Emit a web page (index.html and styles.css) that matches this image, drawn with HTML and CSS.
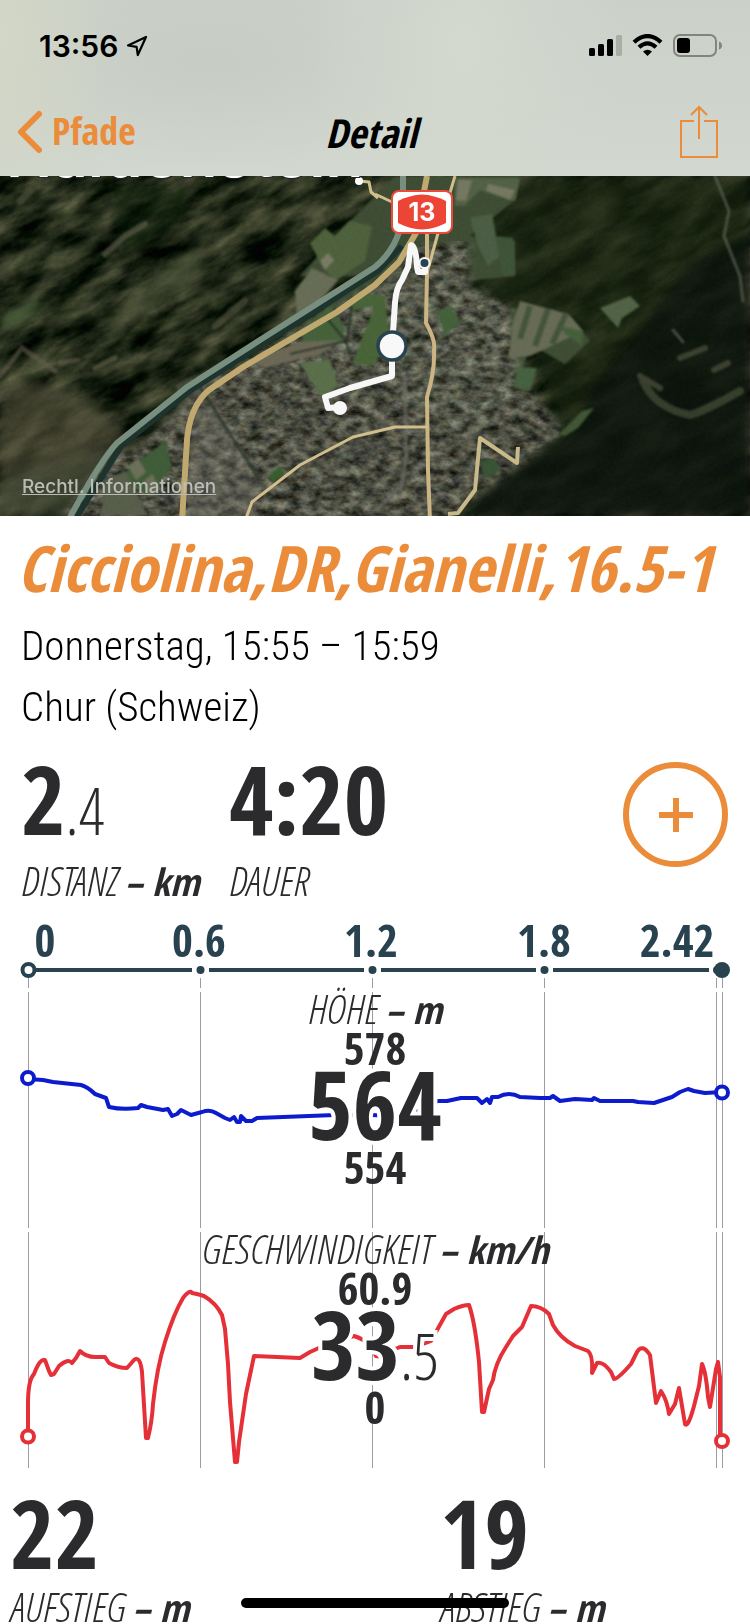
FILE: index.html
```html
<!DOCTYPE html>
<html lang="de">
<head>
<meta charset="utf-8">
<meta name="viewport" content="width=device-width, initial-scale=1">
<title>Detail</title>
<link rel="stylesheet" href="styles.css">
</head>
<body>
<div class="screen">
  <header class="top">
    <div class="status">
      <div class="status-left">
        <span class="time">13:56</span>
        <svg class="location" width="22" height="22" viewBox="0 0 22 22" aria-hidden="true"><path d="M2 10.500 20 2 11.800 20 10.600 11.800Z" fill="none" stroke="#000" stroke-width="2.200" stroke-linejoin="round"/></svg>
      </div>
      <svg class="indicators" width="134" height="24" viewBox="0 0 134 24" aria-hidden="true">
        <rect x="0" y="14" width="6" height="8" rx="1.500"/>
        <rect x="9" y="10" width="6" height="12" rx="1.500"/>
        <rect x="18" y="5" width="6" height="17" rx="1.500"/>
        <rect x="27" y="1" width="6" height="21" rx="1.500" fill="#a8ada5"/>
        <g fill="none" stroke="#000" stroke-width="4.200">
          <path d="M45 8.200Q58.500-4 72 8.200"/>
          <path d="M50 13.300Q58.500 5.500 67 13.300"/>
        </g>
        <path d="M54 17.600Q58.500 13.800 63 17.600L58.500 22Z"/>
        <rect x="85" y="1" width="42" height="21" rx="6" fill="none" stroke="#80857e" stroke-width="2"/>
        <rect x="88" y="4" width="13" height="15" rx="3"/>
        <path d="M130 7.500Q133 8.500 133 11.500T130 15.500Z" fill="#80857e"/>
      </svg>
    </div>
    <nav class="nav">
      <a class="back" href="#pfade">
        <svg width="26" height="44" viewBox="0 0 26 44" aria-hidden="true"><path d="M23 4 5 22 23 40" fill="none" stroke="#ea8c3a" stroke-width="6" stroke-linecap="round" stroke-linejoin="round"/></svg>
        <span>Pfade</span>
      </a>
      <h1 class="nav-title">Detail</h1>
      <button class="share" type="button" aria-label="Teilen">
        <svg width="38" height="54" viewBox="0 0 38 54" aria-hidden="true"><path d="M14 16H1V52H37V16H24M19 34V2M11 10 19 2 27 10" fill="none" stroke="#ea8c3a" stroke-width="2"/></svg>
      </button>
    </nav>
  </header>

  <section class="map">
    <svg class="map-art" viewBox="0 0 750 340" preserveAspectRatio="xMidYMid slice" role="img" aria-label="Karte von Chur">
      <defs>
        <filter id="forest" x="0" y="0" width="100%" height="100%" color-interpolation-filters="sRGB">
          <feTurbulence type="fractalNoise" baseFrequency="0.02 0.05" numOctaves="6" seed="11"/>
          <feColorMatrix values="0.75 0.15 0 0 -0.29  0.68 0.15 0 0 -0.22  0.55 0.1 0 0 -0.21  0 0 0 0 1"/>
        </filter>
        <filter id="grain" x="0" y="0" width="100%" height="100%" color-interpolation-filters="sRGB">
          <feTurbulence type="fractalNoise" baseFrequency="0.35" numOctaves="2" seed="4"/>
          <feColorMatrix values="0.3 0 0 0 -0.08  0 0.3 0 0 -0.08  0 0 0.3 0 -0.08  0 0 0 0 0.45"/>
        </filter>
        <filter id="town" x="0" y="0" width="100%" height="100%" color-interpolation-filters="sRGB">
          <feTurbulence type="fractalNoise" baseFrequency="0.08 0.12" numOctaves="5" seed="7" result="n"/>
          <feColorMatrix in="n" values="0.95 0.1 0 0 -0.13  0.95 0 0 0 -0.08  0.85 0 0.1 0 -0.13  0 0 0 0 1" result="c"/>
          <feGaussianBlur in="SourceAlpha" stdDeviation="4" result="a"/>
          <feComposite in="c" in2="a" operator="in"/>
        </filter>
        <filter id="soft" x="-20%" y="-20%" width="140%" height="140%"><feGaussianBlur stdDeviation="5"/></filter>
        <filter id="blur1"><feGaussianBlur stdDeviation="1"/></filter>
      </defs>
      <rect width="750" height="340" fill="#1c2819"/>
      <g transform="rotate(-28 375 170)"><rect x="-120" y="-250" width="1000" height="850" filter="url(#forest)"/></g>

      <g filter="url(#soft)">
        <path d="M440 0H750V340H455L500 300 560 240 530 170 470 100Z" fill="#1a2916" opacity=".7"/>
        <path d="M750 60 690 85 650 140 600 200 570 255 480 320 470 340H750Z" fill="#081009" opacity=".6"/>
        <path d="M110 10H190L180 50 120 80Z" fill="#0c120a" opacity=".5"/>
        <path d="M0 210 40 205 110 240 130 265 90 290 0 300Z" fill="#605c46" opacity=".6"/>
        <path d="M110 150 170 90 205 70 200 105 150 130 110 165Z" fill="#5a6446" opacity=".6"/>
        <path d="M0 140 40 122 36 138 5 154Z" fill="#47643c" opacity=".8"/>
        <path d="M0 300 100 275 110 300 70 340H0Z" fill="#555a45" opacity=".7"/>
      </g>
      <g filter="url(#blur1)" fill="none" stroke-linecap="round" opacity=".6">
        <path d="M105 78 125 60 145 48" stroke="#74735d" stroke-width="6"/>
        <path d="M0 200 22 172 55 195M60 187 78 184M95 192 115 182" stroke="#716d57" stroke-width="5"/>
        <path d="M215 150 245 125M20 25 30 15" stroke="#5e6148" stroke-width="7"/>
        <path d="M715 0 729 35 724 60 740 100 743 125" stroke="#798071" stroke-width="3"/>
        <path d="M643 205 Q655 232 690 239 Q705 235 740 215" stroke="#5d674c" stroke-width="8"/>
        <path d="M640 200 660 212M680 182 705 172M714 194 728 187" stroke="#66694f" stroke-width="6"/>
        <path d="M673 154 683 166" stroke="#7c8073" stroke-width="3"/>
      </g>

      <path d="M340 55 375 20 395 0H520L515 24 470 60 515 65 515 100 465 105 500 130 570 140 590 165 565 188 530 168 520 205 480 260 430 245 350 180 300 190 240 190 300 150 370 100 300 100Z" fill="#46593b" filter="url(#blur1)"/>
      <path d="M145 265 200 210 390 100 415 70 470 65 470 110 510 130 520 205 545 230 565 255 520 290 475 320 450 345H60L110 285Z" filter="url(#town)" opacity=".8"/>
      <path d="M192 240 215 225 262 310 255 345H186Z M175 210 205 195 225 190 208 212 190 230Z" fill="#8d8a80" opacity=".35" filter="url(#blur1)"/>

      <g filter="url(#blur1)">
        <path d="M455 2H520L515 25 480 14 465 30 455 30Z" fill="#5e6f4d"/>
        <path d="M458 4H472L466 25 456 24ZM488 8 515 14 510 24 486 15Z" fill="#888b70"/>
        <path d="M470 42 492 38 500 80 488 90 478 70Z" fill="#576c50"/>
        <path d="M495 60 513 62 515 98 503 100Z" fill="#476041"/>
        <path d="M520 125 568 138 583 155 530 180 509 182 512 150Z" fill="#777c63"/>
        <path d="M530 130 520 163M548 133 535 170M566 138 552 168" stroke="#4d6045" stroke-width="6"/>
        <path d="M560 150 583 155 582 170 565 158Z" fill="#506d43"/>
        <path d="M600 132 630 120 640 130 622 142 618 152 610 143Z" fill="#5d7250"/>
        <path d="M518 191 537 192 530 214 514 211Z" fill="#50704a"/>
        <path d="M559 258 582 235 594 232 578 252 565 260Z" fill="#4c643b"/>
        <path d="M310 67 325 52 335 60 350 45 372 50 365 85 335 105 322 90Z" fill="#5a6f45"/>
        <path d="M320 85 328 77 334 84 325 94Z" fill="#8c8f74"/>
        <path d="M295 115 312 92 338 104 320 125 297 140Z" fill="#777e63"/>
        <path d="M300 155 330 130 345 152 342 165 305 170Z" fill="#4f7043"/>
        <path d="M250 185 300 166 340 164 320 178 265 192Z" fill="#7c7862"/>
        <path d="M375 130 350 135 355 115 385 120 390 170 370 190 352 188Z" fill="#53733f"/>
        <path d="M300 188 330 183 338 210 322 222Z" fill="#688054"/>
        <path d="M120 300 165 265 172 290 150 320Z" fill="#4a6a40"/>
        <path d="M128 290 138 282 146 296 136 304ZM144 305 152 298 160 312 148 320Z" fill="#7b8265"/>
        <path d="M105 305 125 295 148 340H100Z" fill="#656c55"/>
        <path d="M480 285 495 283 500 295 484 302Z" fill="#40603a"/>
        <path d="M437 135 450 130 460 145 445 160Z" fill="#4e7043"/>
        <path d="M268 300 280 290 285 297 273 307Z" fill="#3f6a36"/>
        <path d="M193 200 260 305M325 140 345 164 350 178M352 130 347 165 290 178" stroke="#27382c" stroke-width="2" fill="none"/>
        <path d="M405 200 406 280 402 310 375 335" stroke="#777a70" stroke-width="4" fill="none" opacity=".7"/>
      </g>
      <rect width="750" height="340" filter="url(#grain)" opacity=".35"/>

      <g fill="none" stroke-linejoin="round">
        <path d="M74 345 121 270 191 214 264 167 378 95 402 70" stroke="#1d332d" stroke-width="6"/>
        <path d="M68 345 Q100 285 117 267L187 211 260 164 375 91Q398 72 403 40V0" stroke="#788e7e" stroke-width="6"/>
        <path d="M182 345 187 264Q190 230 209 214L243 191 337 136 375 109 399 86 416 57 427 0" stroke="#c0a970" stroke-width="6"/>
        <path d="M427 55V97L426 147Q436 165 434 174 435 195 427 221L428 294 430 345" stroke="#cbb584" stroke-width="4"/>
        <path d="M427 97 440 50 455 0M245 345 252 326 300 289 353 261 395 251 428 251M375 18 392 26M359 5 369 6 371 16 378 22" stroke="#d0bf8d" stroke-width="3"/>
        <path d="M448 338 458 337 475 314 480 262 517 287 518 271" stroke="#c8b98a" stroke-width="4"/>
        <path d="M340 231 328 232 325 221 350 212 392 200V171L395 127Q396 112 402 104L408 91 411 69Q416 69 417 91L418 96H425V87" stroke="#f7f7f7" stroke-width="6"/>
      </g>
      <circle cx="359" cy="5" r="4" fill="#fff"/>
      <circle cx="340" cy="232" r="7" fill="#f7f7f7"/>
      <circle cx="424.500" cy="87" r="6" fill="#f7f7f7"/>
      <circle cx="424.500" cy="87" r="4" fill="#294250"/>
      <circle cx="392" cy="170" r="14" fill="#f8f8f8" stroke="#294250" stroke-width="3.500"/>
      <rect x="392" y="15" width="60" height="42" rx="7" fill="#fff" stroke="#ec4b3c" stroke-width="2"/>
      <path d="M398 25Q410 19 422 18.500 434 19 446 25V47Q434 53 422 53.500 410 53 398 47Z" fill="#ec4435"/>
      <text class="shield-text" x="422" y="45">13</text>
      <text class="place-text" x="6" y="1">Haldenstein</text>
    </svg>
    <a class="legal" href="#legal">Rechtl. Informationen</a>
  </section>

  <main class="content">
    <section class="summary">
      <h2 class="track-title">Cicciolina,DR,Gianelli,16.5-1</h2>
      <p class="meta">Donnerstag, 15:55 – 15:59</p>
      <p class="meta">Chur (Schweiz)</p>
      <div class="stats">
        <div class="stat">
          <div class="value">2<span class="fraction">.4</span></div>
          <div class="label">DISTANZ <b>– km</b></div>
        </div>
        <div class="stat">
          <div class="value">4:20</div>
          <div class="label">DAUER</div>
        </div>
        <button class="add" type="button" aria-label="Hinzufügen">
          <svg width="34" height="34" viewBox="0 0 34 34" aria-hidden="true"><path d="M17 0V34M0 17H34" stroke="#ea8c3a" stroke-width="6"/></svg>
        </button>
      </div>
    </section>

    <svg class="axis" viewBox="0 -6 750 82" role="img" aria-label="Distanz in km">
      <g class="axis-text">
        <text x="45" y="45">0</text>
        <text x="199" y="45">0.6</text>
        <text x="371" y="45">1.2</text>
        <text x="544" y="45">1.8</text>
        <text x="677" y="45">2.42</text>
      </g>
      <path d="M34 58H192M209 58H364M381 58H536M553 58H709" stroke="#294250" stroke-width="4"/>
      <g fill="#294250"><circle cx="200.500" cy="58" r="4"/><circle cx="372.500" cy="58" r="4"/><circle cx="544.500" cy="58" r="4"/><circle cx="717" cy="58" r="4"/><circle cx="722" cy="58" r="8"/></g>
      <circle cx="28.500" cy="58" r="6" fill="#fff" stroke="#294250" stroke-width="4"/>
      <path d="M28.500 66V76M200.500 66V76M372.500 66V76M544.500 66V76M716.500 66V76M722.500 66V76" stroke="#9b9ca4"/>
    </svg>

    <section class="chart">
      <svg class="plot" viewBox="0 0 750 236" aria-hidden="true">
        <path d="M28.500 0V236M200.500 0V236M372.500 0V236M544.500 0V236M716.500 0V236M722.500 0V236" stroke="#9b9ca4"/>
        <path d="M28 87 43 88 53 90 81 93Q88 95 95 102L106 106 109 115Q122 118 138 116L141 113 147 115 163 118 168 117 172 124 177 122 181 118 191 123 202 120Q210 117 216 121L225 126 230 128 234 125 237 130 240 130 241 124 246 129 252 129 257 126 335 123 372 123 392 124 414 119 438 109 447 109 461 106 477 106 482 111 487 107 490 111 492 105 498 105Q509 99 520 105L540 106 550 106 553 104 560 109 575 107 592 108 594 106 600 109 633 109 638 110 654 111 672 105 680 100 688 97 694 99 705 101 722 100" fill="none" stroke="#0d1bcf" stroke-width="4" stroke-linejoin="round"/>
        <circle cx="28" cy="86" r="6" fill="#fff" stroke="#0d1bcf" stroke-width="4"/>
        <circle cx="722" cy="100.500" r="6" fill="#fff" stroke="#0d1bcf" stroke-width="4"/>
      </svg>
      <div class="readout">
        <div class="label">HÖHE <b>– m</b></div>
        <div class="bound">578</div>
        <div class="value halo">564</div>
        <div class="bound">554</div>
      </div>
    </section>

    <section class="chart">
      <svg class="plot" viewBox="0 0 750 236" aria-hidden="true">
        <path d="M28.500 0V236M200.500 0V236M372.500 0V236M544.500 0V236M716.500 0V236M722.500 0V236" stroke="#9b9ca4"/>
        <path d="M28 204V172Q28 148 34 142 40 126 45 128L49 139 51 143 54 142 59 134Q68 126 72 131L76 126 80 119Q86 125 95 125L105 125 109 131Q118 136 127 136L134 128Q140 123 142 140L146 206 148 206Q152 190 153 172 157 135 165 110 174 81 183 66 190 57 192 61 198 62 204 64 216 71 222 83L225 97 228 132 230 170 235 230 237 230 239 210 246 162 254 124 300 126 310 120 330 111 354 104Q364 107 371 114L376 124 382 125 388 120 400 115 415 115 431 109 446 82 454 77Q463 73 469 73 475 90 479 130L482 180 484 180 489 157 493 148Q495 132 506 115L513 104 522 95 531 74Q541 74 549 82L553 93Q560 106 575 114L588 119Q593 123 592 141L597 131Q603 129 611 140L614 147Q618 147 631 132L637 120Q642 111 650 123L656 171 661 159Q667 168 669 182L675 172 679 156 685 192Q688 196 694 174L699 154 702 132Q706 140 708 165L710 175 716 137 718 130 720 145V205" fill="none" stroke="#e53038" stroke-width="4" stroke-linejoin="round"/>
        <circle cx="28" cy="204.500" r="6" fill="#fff" stroke="#e53038" stroke-width="4"/>
        <circle cx="722" cy="209" r="6" fill="#fff" stroke="#e53038" stroke-width="4"/>
      </svg>
      <div class="readout">
        <div class="label">GESCHWINDIGKEIT <b>– km/h</b></div>
        <div class="bound">60.9</div>
        <div class="value halo">33<span class="fraction">.5</span></div>
        <div class="bound">0</div>
      </div>
    </section>

    <section class="totals">
      <div class="stat">
        <div class="value">22</div>
        <div class="label">AUFSTIEG <b>– m</b></div>
      </div>
      <div class="stat">
        <div class="value">19</div>
        <div class="label">ABSTIEG <b>– m</b></div>
      </div>
    </section>
  </main>
  <div class="home-indicator"></div>
</div>
</body>
</html>
```
FILE: styles.css
```css
* { box-sizing: border-box; }

body {
  margin: 0;
  background: #fff;
  color: #2b2b2d;
  font-family: "Open Sans Condensed", "Roboto Condensed", "Open Sans", sans-serif;
  font-weight: 700;
}

h1, h2, p { margin: 0; }

button {
  padding: 0;
  border: 0;
  background: none;
  cursor: pointer;
}

svg { display: block; }

.screen {
  position: relative;
  display: flex;
  flex-direction: column;
  height: 100vh;
  overflow: hidden;
}

.top {
  flex: none;
  background:
    radial-gradient(ellipse 120px 240px at 0 20%, #d3d7c6, transparent),
    radial-gradient(ellipse 160px 260px at 62% 25%, #d4d9cf, transparent),
    radial-gradient(ellipse 240px 110px at 28% 35%, #c7ccc4, transparent),
    linear-gradient(#cbd0c9, #cfd4cc 60%, #d2d7cf);
}

.status {
  display: flex;
  justify-content: space-between;
  align-items: center;
  height: 92px;
  padding: 0 27px 0 39px;
}

.status-left {
  display: flex;
  align-items: center;
  gap: 8px;
}

.time {
  color: #000;
  font: 600 30px/36px Inter, sans-serif;
}

.nav {
  display: grid;
  grid-template-columns: 1fr auto 1fr;
  align-items: center;
  height: 84px;
  padding: 0 24px 4px 16px;
}

.back {
  display: flex;
  align-items: center;
  gap: 10px;
  color: #ea8c3a;
  font-size: 38px;
  line-height: 44px;
  text-decoration: none;
}

.back span { padding-bottom: 4px; }

.nav-title {
  padding-top: 2px;
  color: #000;
  font-size: 40px;
  font-style: italic;
  line-height: 48px;
}

.share {
  justify-self: end;
  margin-right: 8px;
}

.map {
  display: grid;
  flex: none;
  height: 340px;
  background: #1c2819;
}

.map-art {
  grid-area: 1 / 1;
  width: 100%;
  height: 340px;
}

.legal {
  grid-area: 1 / 1;
  place-self: end start;
  margin: 0 0 18px 22px;
  color: #babdb7;
  font: 500 19px/22px Inter, sans-serif;
}

.shield-text {
  fill: #fff;
  font: 700 25px Inter, sans-serif;
  text-anchor: middle;
}

.place-text {
  fill: #fff;
  stroke: #222;
  stroke-width: 2px;
  paint-order: stroke;
  font: 600 62px Inter, sans-serif;
}

.summary { padding: 12px 22px 0 21px; }

.track-title {
  margin: 0 0 8px -4px;
  color: #ea8c3a;
  font-size: 64px;
  font-style: italic;
  line-height: 80px;
  white-space: nowrap;
}

.meta {
  color: #000;
  font-family: "Roboto Condensed", "Open Sans Condensed Light", sans-serif;
  font-size: 41px;
  font-weight: 300;
  line-height: 61px;
}

.stats {
  display: grid;
  grid-template-columns: 208px 1fr auto;
  padding-top: 12px;
}

.stats .label {
  margin-top: 10px;
  padding-bottom: 2px;
}

.value {
  font-size: 96px;
  line-height: 96px;
}

.fraction {
  font-family: "Open Sans Condensed Light", "Roboto Condensed", sans-serif;
  font-size: 64px;
  font-weight: 300;
  line-height: 0;
}

.label {
  font-family: "Open Sans Condensed Light", "Roboto Condensed", sans-serif;
  font-size: 41px;
  font-style: italic;
  font-weight: 300;
  line-height: 48px;
  white-space: nowrap;
}

.label b {
  font-family: "Open Sans Condensed", "Roboto Condensed", sans-serif;
  font-size: 38px;
  font-weight: 700;
  line-height: 0;
}

.add {
  display: grid;
  place-items: center;
  width: 105px;
  height: 105px;
  margin-top: 12px;
  border: 6px solid #ea8c3a;
  border-radius: 50%;
}

.axis { width: 100%; }

.axis-text {
  fill: #294250;
  font-size: 45px;
  text-anchor: middle;
}

.chart {
  display: grid;
  padding-top: 4px;
}

.plot {
  grid-area: 1 / 1;
  width: 100%;
}

.readout {
  grid-area: 1 / 1;
  text-align: center;
}

.readout .label {
  padding-bottom: 3px;
  line-height: 32px;
}

.bound {
  font-size: 45px;
  line-height: 42px;
}

.halo {
  margin: -6px 0 3px;
  line-height: 80px;
  -webkit-text-stroke: 8px #fff;
  paint-order: stroke fill;
}

.totals {
  display: grid;
  grid-template-columns: 430px 1fr;
  padding: 16px 10px 0;
}

.totals .label { margin-top: 2px; }

.home-indicator {
  position: absolute;
  bottom: 16px;
  left: 50%;
  width: 268px;
  height: 10px;
  border-radius: 5px;
  background: #000;
  transform: translateX(-50%);
}
```
